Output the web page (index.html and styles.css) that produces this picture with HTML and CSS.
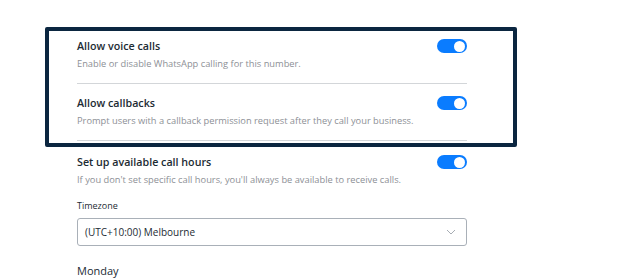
FILE: index.html
```html
<!DOCTYPE html>
<html lang="en">
<head>
<meta charset="utf-8">
<title>Calling settings</title>
<link rel="stylesheet" href="styles.css">
</head>
<body>
<main class="panel">
  <section class="highlight">
    <div class="setting">
      <div class="setting-text">
        <div class="setting-title">Allow voice calls</div>
        <div class="setting-desc">Enable or disable WhatsApp calling for this number.</div>
      </div>
      <span class="toggle"><span class="knob"></span></span>
    </div>
    <div class="setting">
      <div class="setting-text">
        <div class="setting-title">Allow callbacks</div>
        <div class="setting-desc">Prompt users with a callback permission request after they call your business.</div>
      </div>
      <span class="toggle"><span class="knob"></span></span>
    </div>
  </section>
  <div class="setting plain">
    <div class="setting-text">
      <div class="setting-title">Set up available call hours</div>
      <div class="setting-desc">If you don't set specific call hours, you'll always be available to receive calls.</div>
    </div>
    <span class="toggle"><span class="knob"></span></span>
  </div>
  <label class="field-label">Timezone</label>
  <div class="select">
    <span>(UTC+10:00) Melbourne</span>
    <svg class="chevron" width="10" height="6" viewBox="0 0 10 6"><path d="M1 1l4 4 4-4" fill="none" stroke="#a7adb4" stroke-width="1"/></svg>
  </div>
  <div class="day">Monday</div>
</main>
</body>
</html>
```
FILE: styles.css
```css
html, body {
  margin: 0;
  padding: 0;
  background: #ffffff;
}
body {
  font-family: "Open Sans", "Noto Sans", sans-serif;
  color: #1c2b33;
}
.panel {
  width: 390px;
  margin-left: 77px;
  padding-top: 27px;
  display: flex;
  flex-direction: column;
}
.highlight {
  margin: 0 -50px 0 -32px;
  padding: 6px 46px 0 28px;
  border: 4px solid #0b2640;
  border-radius: 2px;
}
.setting {
  display: flex;
  justify-content: space-between;
  align-items: flex-start;
  padding-bottom: 12px;
  border-bottom: 1px solid #d3d6d9;
}
.setting + .setting {
  padding-top: 10px;
}
.highlight .setting:last-child {
  margin-bottom: 2px;
}
.setting.plain {
  border-bottom: none;
  padding-top: 6px;
  padding-bottom: 0;
}
.setting-title {
  font-size: 10.7px;
  font-weight: 600;
  line-height: 18px;
  color: #1c2b33;
}
.setting-desc {
  font-size: 9.3px;
  line-height: 14px;
  margin-top: 2px;
  color: #8d9096;
}
.toggle {
  width: 30px;
  height: 14px;
  border-radius: 7px;
  background: #0a7cff;
  margin-top: 2px;
  display: flex;
  justify-content: flex-end;
  align-items: center;
  padding: 0 2px;
  box-sizing: border-box;
}
.knob {
  width: 11px;
  height: 11px;
  border-radius: 50%;
  background: #ffffff;
}
.field-label {
  font-size: 9px;
  line-height: 14px;
  margin-top: 12px;
  color: #1c2b33;
}
.select {
  margin-top: 5px;
  height: 28px;
  border: 1px solid #a9b0b8;
  border-radius: 3px;
  box-sizing: border-box;
  display: flex;
  align-items: center;
  justify-content: space-between;
  padding: 0 10px 0 7px;
  font-size: 10px;
  color: #1c2b33;
}
.day {
  margin-top: 17px;
  font-size: 11px;
  line-height: 16px;
  color: #1c2b33;
}
```
